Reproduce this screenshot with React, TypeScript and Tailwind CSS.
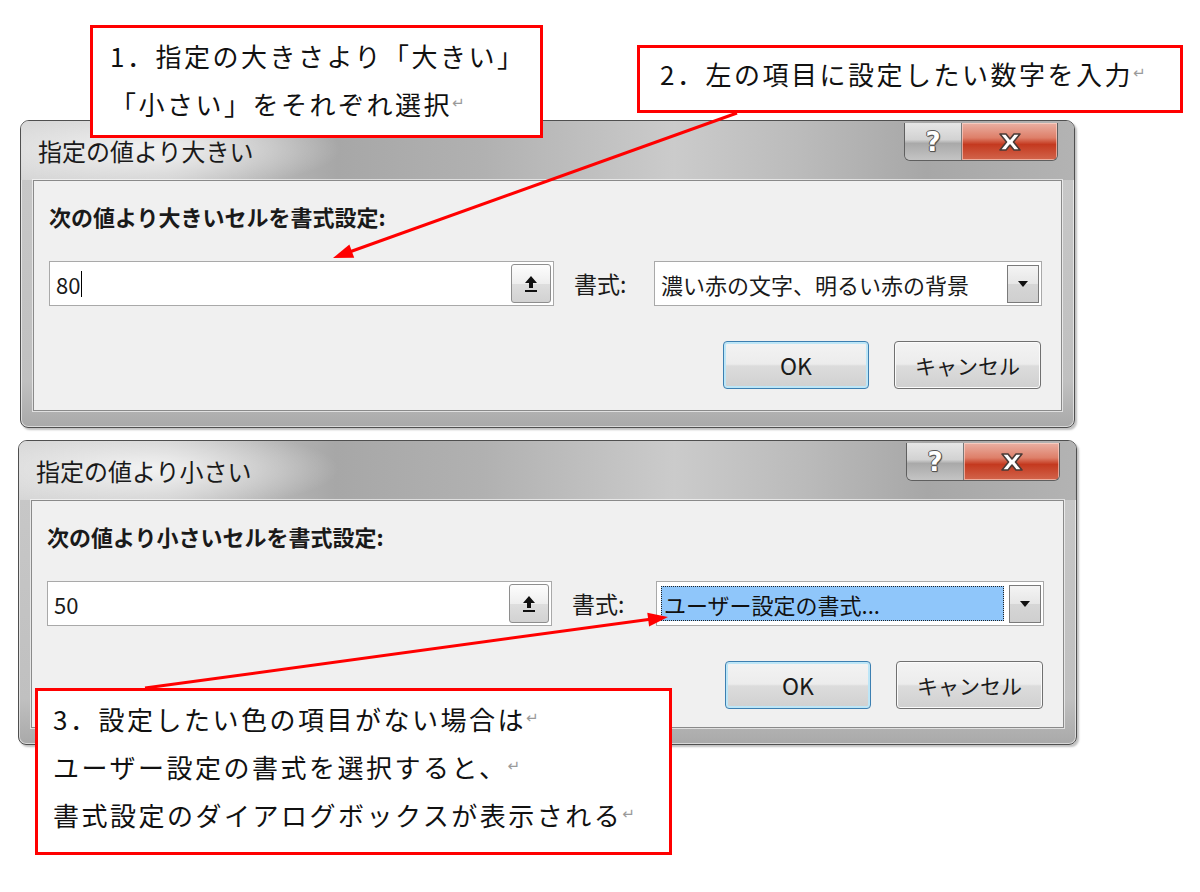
import React from "react";

const CJK = "font-['Noto_Sans_CJK_JP','Noto_Sans',sans-serif]";

function RefEditIcon() {
  return (
    <svg width="16" height="18" viewBox="0 0 16 18">
      <path d="M8 1 L14 8 L10 8 L10 13 L6 13 L6 8 L2 8 Z" fill="#111" />
      <rect x="2" y="15" width="12" height="2" fill="#111" />
    </svg>
  );
}

function CloseGlyph() {
  return (
    <svg width="30" height="22" viewBox="0 0 30 22">
      <path
        d="M5 3 L11 3 L15 8 L19 3 L25 3 L18.5 11 L25 19 L19 19 L15 14 L11 19 L5 19 L11.5 11 Z"
        fill="#ffffff"
        stroke="#4a3a36"
        strokeWidth="1.6"
        strokeLinejoin="round"
      />
    </svg>
  );
}

function WindowButtons() {
  return (
    <div className="flex h-[38px] mt-[2px] overflow-hidden rounded-b-[6px] border border-t-0 border-[#5f5f5f]">
      <div className="w-[57px] flex items-center justify-center border-r border-[#7a7a7a] bg-[linear-gradient(180deg,#e6e6e6_0%,#d2d2d2_45%,#a9a9a9_55%,#c4c4c4_100%)]">
        <span className="text-[26px] leading-none font-bold text-white font-['DejaVu_Sans',sans-serif] [text-shadow:1px_0_0_#555,-1px_0_0_#555,0_1px_0_#555,0_-1px_0_#555,1px_1px_1px_#444]">
          ?
        </span>
      </div>
      <div className="w-[95px] flex items-center justify-center bg-[linear-gradient(180deg,#eab0a3_0%,#de7f69_40%,#c4391f_58%,#d2654c_100%)] shadow-[inset_0_0_0_1px_rgba(255,220,210,0.6)]">
        <CloseGlyph />
      </div>
    </div>
  );
}

type DialogProps = {
  title: string;
  label: string;
  value: string;
  format: string;
  selected?: boolean;
  caret?: boolean;
  className: string;
};

function Dialog({ title, label, value, format, selected, caret, className }: DialogProps) {
  return (
    <div
      className={`relative flex flex-col rounded-t-[9px] rounded-b-[8px] border border-[#4f4f4f] bg-[linear-gradient(180deg,#c9c9c9_0%,#c0c0c0_85%,#a9a9a9_100%)] shadow-[inset_0_0_0_1px_rgba(255,255,255,0.55),2px_2px_2px_rgba(0,0,0,0.25)] ${className}`}
    >
      {/* title bar */}
      <div className="h-[59px] shrink-0 flex justify-between pl-[17px] pr-[16px] rounded-t-[8px] bg-[radial-gradient(ellipse_190px_42px_at_130px_28px,rgba(255,255,255,0.75),rgba(255,255,255,0)),linear-gradient(90deg,#d6d6d6_0%,#cdcdcd_14%,#a7a7a7_30%,#b1b1b1_44%,#cbcbcb_62%,#bbbbbb_74%,#a7a7a7_86%,#b3b3b3_100%)]">
        <div className={`pt-[14px] text-[24px] leading-[32px] text-[#1a1a1a] ${CJK}`}>{title}</div>
        <WindowButtons />
      </div>

      {/* client area */}
      <div className="flex-1 mx-[12px] mb-[16px] flex flex-col border border-[#8a8a8a] bg-[#f0f0f0] shadow-[0_0_0_1px_rgba(255,255,255,0.6)]">
        <div className={`mt-[20px] ml-[15px] text-[22px] leading-[30px] font-bold text-[#1a1a1a] ${CJK}`}>{label}</div>

        <div className="mt-[30px] flex items-center pl-[15px] pr-[19px]">
          <div className="relative w-[505px] h-[45px] bg-white border border-[#a9a9a9] flex items-center">
            <span className={`pl-[6px] text-[22px] leading-none text-[#1a1a1a] ${CJK}`}>{value}</span>
            {caret && <span className="ml-[1px] w-[1px] h-[26px] bg-black" />}
            <div className="absolute right-[2px] top-[2px] w-[40px] h-[39px] rounded-[3px] border border-[#8e8e8e] bg-[linear-gradient(180deg,#fdfdfd_0%,#eeeeee_50%,#dedede_51%,#d2d2d2_100%)] flex items-center justify-center">
              <RefEditIcon />
            </div>
          </div>
          <span className={`ml-[20px] text-[23px] leading-none text-[#1a1a1a] ${CJK}`}>書式:</span>
          <div className="relative ml-auto w-[388px] h-[45px] bg-white border border-[#a9a9a9] flex items-center">
            {selected ? (
              <div className="ml-[4px] w-[343px] h-[35px] bg-[#8fc6fa] border border-dotted border-[#222] flex items-center">
                <span className={`pl-[2px] text-[22px] leading-none text-[#111] ${CJK}`}>{format}</span>
              </div>
            ) : (
              <span className={`pl-[6px] text-[22px] leading-none text-[#1a1a1a] ${CJK}`}>{format}</span>
            )}
            <div className="absolute right-[2px] top-[3px] w-[32px] h-[38px] border border-[#7a7a7a] bg-[linear-gradient(180deg,#f4f4f4_0%,#e6e6e6_50%,#d6d6d6_51%,#cfcfcf_100%)] flex items-center justify-center">
              <svg width="12" height="8" viewBox="0 0 12 8">
                <path d="M1 1 L11 1 L6 7 Z" fill="#111" />
              </svg>
            </div>
          </div>
        </div>

        <div className="mt-[35px] flex justify-end gap-[25px] pr-[20px]">
          <div className="w-[146px] h-[48px] rounded-[4px] border border-[#3c7fb1] bg-[linear-gradient(180deg,#f3f3f3_0%,#ececec_48%,#dcdcdc_52%,#d0d0d0_100%)] shadow-[inset_0_0_0_2px_#bde6f7] flex items-center justify-center">
            <span className={`text-[23px] leading-none text-[#1a1a1a] ${CJK}`}>OK</span>
          </div>
          <div className="w-[147px] h-[48px] rounded-[4px] border border-[#707070] bg-[linear-gradient(180deg,#f3f3f3_0%,#ececec_48%,#dcdcdc_52%,#d0d0d0_100%)] shadow-[inset_0_0_0_1px_#fbfbfb] flex items-center justify-center">
            <span className={`text-[21px] leading-none text-[#1a1a1a] ${CJK}`}>キャンセル</span>
          </div>
        </div>
      </div>
    </div>
  );
}

function Ret() {
  return <span className="text-[15px] text-[#9a9a9a] tracking-normal font-['DejaVu_Sans',sans-serif]">↵</span>;
}

type Line = { text: string; mark?: boolean };

function Callout({ lines, className }: { lines: Line[]; className: string }) {
  return (
    <div className={`absolute bg-white border-[3px] border-[#ff0000] ${CJK} ${className}`}>
      {lines.map((l) => (
        <div key={l.text} className="h-[48px] flex items-center whitespace-nowrap text-[26px] tracking-[2.5px] text-[#111]">
          <span>{l.text}</span>
          {l.mark !== false && <Ret />}
        </div>
      ))}
    </div>
  );
}

export default function App() {
  return (
    <div className={`relative w-[1200px] h-[892px] overflow-hidden bg-white ${CJK}`}>
      <div className="flex flex-col pt-[120px]">
        <Dialog
          className="ml-[20px] w-[1055px] h-[308px]"
          title="指定の値より大きい"
          label="次の値より大きいセルを書式設定:"
          value="80"
          caret
          format="濃い赤の文字、明るい赤の背景"
        />
        <Dialog
          className="mt-[12px] ml-[18px] w-[1059px] h-[305px]"
          title="指定の値より小さい"
          label="次の値より小さいセルを書式設定:"
          value="50"
          format="ユーザー設定の書式..."
          selected
        />
      </div>

      {/* leader arrows */}
      <svg className="absolute left-0 top-0 pointer-events-none" width="1200" height="892" viewBox="0 0 1200 892">
        <line x1="737" y1="113" x2="348" y2="252.5" stroke="#ff0000" strokeWidth="3" />
        <polygon points="333,258 354.2,257.8 349.4,244.6" fill="#ff0000" />
        <line x1="145" y1="688" x2="652" y2="619" stroke="#ff0000" strokeWidth="3" />
        <polygon points="668,617 649.1,626.6 647.3,612.8" fill="#ff0000" />
      </svg>

      <Callout
        className="left-[90px] top-[25px] w-[453px] h-[113px] pl-[17px] pt-[3px]"
        lines={[{ text: "1．指定の大きさより「大きい」", mark: false }, { text: "「小さい」をそれぞれ選択" }]}
      />
      <Callout
        className="left-[637px] top-[45px] w-[546px] h-[68px] pl-[20px] pt-[1px]"
        lines={[{ text: "2．左の項目に設定したい数字を入力" }]}
      />
      <Callout
        className="left-[35px] top-[688px] w-[637px] h-[167px] pl-[15px] pt-[3px]"
        lines={[
          { text: "3．設定したい色の項目がない場合は" },
          { text: "ユーザー設定の書式を選択すると、" },
          { text: "書式設定のダイアログボックスが表示される" },
        ]}
      />
    </div>
  );
}
